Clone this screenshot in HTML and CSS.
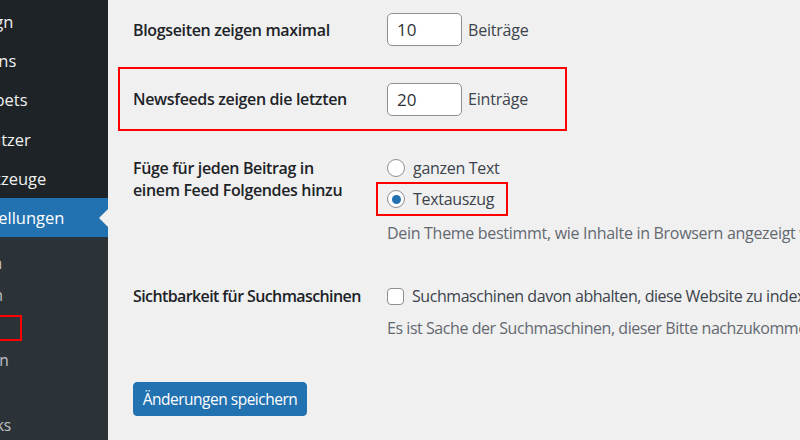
FILE: index.html
```html
<!DOCTYPE html>
<html lang="de">
<head>
<meta charset="utf-8">
<title>Einstellungen › Lesen</title>
<link rel="stylesheet" href="styles.css">
</head>
<body>
<div class="page">
  <nav class="sidebar">
    <ul class="menu">
      <li class="item"><span class="name">Design</span></li>
      <li class="item"><span class="name">Plugins</span></li>
      <li class="item"><span class="name">Snippets</span></li>
      <li class="item"><span class="name">Benutzer</span></li>
      <li class="item"><span class="name">Werkzeuge</span></li>
      <li class="item current"><span class="name">Einstellungen</span></li>
    </ul>
    <ul class="submenu">
      <li class="sub"><span class="name">Allgemein</span></li>
      <li class="sub"><span class="name">Schreiben</span></li>
      <li class="sub active"><span class="mark">Lesen</span></li>
      <li class="sub"><span class="name">Diskussion</span></li>
      <li class="sub"><span class="name">Medien</span></li>
      <li class="sub"><span class="name">Permalinks</span></li>
    </ul>
  </nav>

  <main class="content">
    <div class="row row-first">
      <div class="label">Blogseiten zeigen maximal</div>
      <div class="field">
        <input class="num" type="text" value="10">
        <span class="unit">Beiträge</span>
      </div>
    </div>

    <div class="row row-marked">
      <div class="label">Newsfeeds zeigen die letzten</div>
      <div class="field">
        <input class="num" type="text" value="20">
        <span class="unit">Einträge</span>
      </div>
    </div>

    <div class="row row-feed">
      <div class="label label-multi">Füge für jeden Beitrag in<br>einem Feed Folgendes hinzu</div>
      <div class="field-col">
        <div class="option"><span class="radio"></span><span class="opt-text">ganzen Text</span></div>
        <div class="option option-marked"><span class="radio checked"></span><span class="opt-text">Textauszug</span></div>
        <p class="desc desc-feed">Dein Theme bestimmt, wie Inhalte in Browsern angezeigt werden.</p>
      </div>
    </div>

    <div class="row row-search">
      <div class="label label-narrow">Sichtbarkeit für Suchmaschinen</div>
      <div class="field-col">
        <div class="option"><span class="check"></span><span class="opt-text narrow">Suchmaschinen davon abhalten, diese Website zu indexieren.</span></div>
        <p class="desc desc-search narrow">Es ist Sache der Suchmaschinen, dieser Bitte nachzukommen.</p>
      </div>
    </div>

    <button class="save" type="button">Änderungen speichern</button>
  </main>
</div>
</body>
</html>
```

FILE: styles.css
```css
* { box-sizing: border-box; }

html, body {
  margin: 0;
  padding: 0;
}

body {
  width: 800px;
  height: 440px;
  overflow: hidden;
  background: #f0f0f1;
  font-family: "Open Sans", "Noto Sans", "Liberation Sans", sans-serif;
  color: #3c434a;
}

.page {
  display: flex;
  height: 440px;
}

/* ---------- sidebar ---------- */
.sidebar {
  width: 108px;
  flex: 0 0 108px;
  height: 440px;
  background: #1d2327;
  overflow: hidden;
  display: flex;
  flex-direction: column;
}

.menu, .submenu {
  list-style: none;
  margin: 0;
  padding: 0;
}

.menu {
  padding-top: 1.5px;
}

.item {
  position: relative;
  height: 39.3px;
  display: flex;
  align-items: center;
  font-size: 16.5px;
  color: #f0f0f1;
  white-space: nowrap;
}

.item .name {
  margin-left: -39px;
}

.item.current {
  background: #2271b1;
  color: #ffffff;
}

.item.current::after {
  content: "";
  position: absolute;
  right: 0;
  top: 50%;
  margin-top: -9px;
  border-style: solid;
  border-width: 9px 9px 9px 0;
  border-color: transparent #f0f0f1 transparent transparent;
}

.submenu {
  flex: 1;
  background: #2c3338;
  padding-top: 9.5px;
}

.sub {
  height: 32.4px;
  display: flex;
  align-items: center;
  font-size: 15.5px;
  color: #c3c4c7;
  white-space: nowrap;
}

.sub .name {
  margin-left: -69px;
}

.sub .mark {
  display: inline-block;
  margin-left: -80px;
  width: 102px;
  height: 26px;
  line-height: 22px;
  border: 2px solid #ff0000;
  color: #ffffff;
  font-weight: 600;
}

/* ---------- content ---------- */
.content {
  flex: 1;
  padding-left: 25px;
  overflow: hidden;
  white-space: nowrap;
}

.row {
  display: flex;
  align-items: center;
}

.label {
  width: 254px;
  flex: 0 0 254px;
  font-size: 16px;
  font-weight: 600;
  color: #1d2327;
  line-height: 22px;
  letter-spacing: -0.35px;
}

.label-narrow {
  letter-spacing: -0.6px;
}

.field {
  display: flex;
  align-items: center;
}

.num {
  width: 75px;
  height: 33px;
  margin: 0;
  padding: 0 0 0 9px;
  border: 1px solid #8c8f94;
  border-radius: 5px;
  background: #ffffff;
  font-family: inherit;
  font-size: 17px;
  color: #2c3338;
  outline: none;
}

.unit {
  margin-left: 6px;
  font-size: 16px;
  color: #3c434a;
  letter-spacing: -0.2px;
}

.row-first {
  height: 59px;
}

.row-marked {
  margin-top: 8px;
  margin-left: -15px;
  width: 449px;
  height: 64px;
  padding-left: 13px;
  border: 2px solid #ff0000;
}

.row-feed {
  margin-top: 26px;
  align-items: flex-start;
}

.field-col {
  display: flex;
  flex-direction: column;
}

.option {
  display: flex;
  align-items: center;
  height: 22px;
  font-size: 16px;
  color: #3c434a;
  letter-spacing: -0.3px;
}

.option-marked {
  margin-top: 3px;
  margin-left: -11px;
  width: 132px;
  height: 34px;
  padding-left: 9px;
  border: 2px solid #ff0000;
}

.radio {
  width: 18px;
  height: 18px;
  flex: 0 0 18px;
  border: 1px solid #8c8f94;
  border-radius: 50%;
  background: #ffffff;
  display: flex;
  align-items: center;
  justify-content: center;
}

.radio.checked::before {
  content: "";
  width: 9px;
  height: 9px;
  border-radius: 50%;
  background: #2271b1;
}

.check {
  width: 17px;
  height: 17px;
  flex: 0 0 17px;
  border: 1px solid #8c8f94;
  border-radius: 4px;
  background: #ffffff;
}

.opt-text {
  margin-left: 8px;
}

.desc {
  margin: 0;
  font-size: 16px;
  line-height: 22px;
  color: #646970;
  letter-spacing: -0.3px;
}

.narrow {
  letter-spacing: -0.45px;
}

.desc-feed {
  margin-top: 6px;
}

.row-search {
  margin-top: 41px;
  align-items: flex-start;
}

.desc-search {
  margin-top: 10px;
}

.save {
  display: block;
  margin: 43px 0 0 0;
  width: 174px;
  height: 34px;
  padding: 0;
  border: 1px solid #2271b1;
  border-radius: 4px;
  background: #2271b1;
  color: #ffffff;
  font-family: inherit;
  font-size: 15.5px;
  letter-spacing: -0.5px;
  cursor: pointer;
}
```
